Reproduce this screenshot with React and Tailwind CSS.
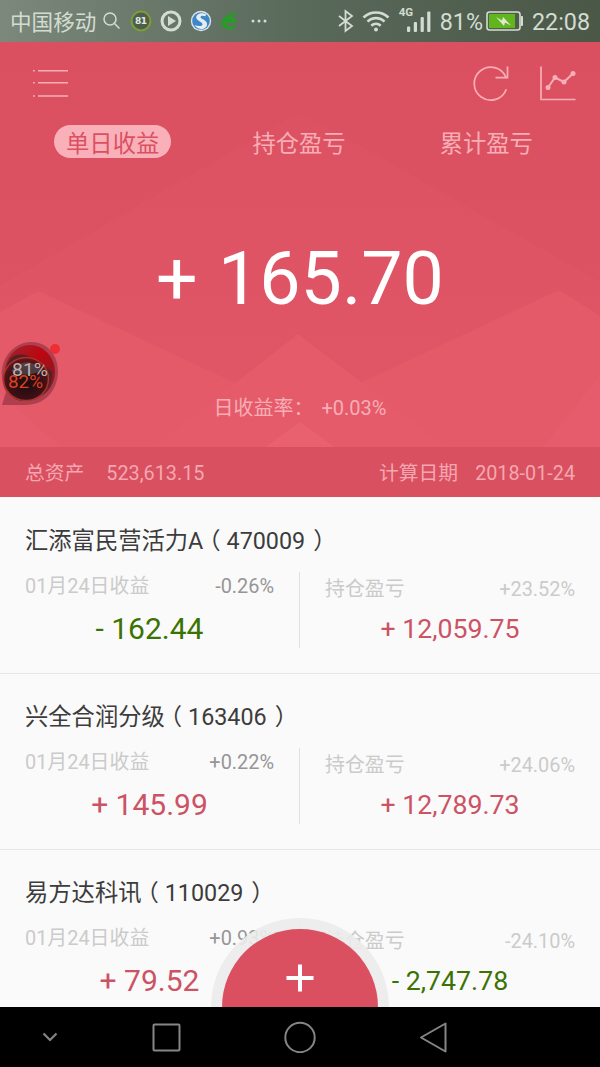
import React from 'react';

const funds = [
  { name: '汇添富民营活力A', code: '470009', dayRate: '-0.26%', day: '- 162.44', totalRate: '+23.52%', total: '+ 12,059.75' },
  { name: '兴全合润分级', code: '163406', dayRate: '+0.22%', day: '+ 145.99', totalRate: '+24.06%', total: '+ 12,789.73' },
  { name: '易方达科讯', code: '110029', dayRate: '+0.93%', day: '+ 79.52', totalRate: '-24.10%', total: '- 2,747.78' },
];

const tabs = ['单日收益', '持仓盈亏', '累计盈亏'];

const amountColor = (value) => (value.startsWith('-') ? 'text-[#3b7303]' : 'text-[#cc5264]');

const StatusBar = () => (
  <div className="flex h-[42px] shrink-0 items-center bg-linear-to-r from-[#7b887b] via-[#59695a] to-[#4b5747] pl-[10px] pr-[10px] text-[#d3dcd2]">
    <span className="w-[87px] pt-[3px] text-[21.6px] leading-[39px]">中国移动</span>
    <svg className="ml-[5px] h-[20px] w-[20px]" viewBox="0 0 20 20" fill="none" stroke="currentColor" strokeWidth="1.5">
      <circle cx="8" cy="8" r="6" />
      <path d="M12.5 12.5 17.5 17.5" />
    </svg>
    <svg className="ml-[8px] h-[22px] w-[22px]" viewBox="0 0 22 22">
      <circle cx="11" cy="11" r="9.4" fill="#4d5f4c" stroke="#7d9e36" strokeWidth="2" />
      <text x="5" y="14.4" fontSize="9" fontWeight="700" fill="#e3e9e2" fontFamily="DejaVu Sans" textLength="12">81</text>
    </svg>
    <svg className="ml-[8px] h-[22px] w-[22px]" viewBox="0 0 22 22">
      <circle cx="11" cy="11" r="9" fill="none" stroke="currentColor" strokeWidth="3" />
      <path d="M8 6v10l8-5z" fill="currentColor" />
    </svg>
    <svg className="ml-[8px] h-[22px] w-[22px]" viewBox="0 0 22 22">
      <circle cx="11" cy="11" r="10.2" fill="#dce5ea" />
      <circle cx="11" cy="11" r="8.8" fill="#3d86c8" />
      <path d="M16 4C10 1.500 5 5 6.500 8.500c1.300 3 6.500 3.500 6 6-.4 2-4.500 2-8 .5 3 5.500 11.500 5.500 12.500 0 .8-5-6-5.500-6.500-7.700-.3-1.800 2.600-2 5-1z" fill="#e6edf0" />
    </svg>
    <svg className="ml-[8px] h-[22px] w-[20px]" viewBox="0 0 20 22" fill="none">
      <path d="M14.500 15.500A5.500 5.500 0 1 1 15 11.500H5" stroke="#1fa31f" strokeWidth="2.600" />
      <path d="M2 18C-1 13 8 3 15 3q1.500.5.5 3" stroke="#1fa31f" strokeWidth="1.400" />
    </svg>
    <svg className="ml-[10px] h-[6px] w-[18px]" viewBox="0 0 18 6" fill="currentColor">
      <circle cx="3" cy="3" r="1.500" />
      <circle cx="9" cy="3" r="1.500" />
      <circle cx="15" cy="3" r="1.500" />
    </svg>
    <div className="ml-auto flex items-center">
      <svg className="h-[24px] w-[18px]" viewBox="0 0 18 24" fill="none" stroke="currentColor" strokeWidth="1.800">
        <path d="M2 7l13 10-6.500 5V2L15 7 2 17" />
      </svg>
      <svg className="ml-[7px] mr-[2px] h-[22px] w-[28px]" viewBox="0 0 28 22" fill="none" stroke="currentColor" strokeWidth="2.600">
        <path d="M1.500 7.500a18 18 0 0 1 25 0" />
        <path d="M5.500 11.700a12 12 0 0 1 17 0" />
        <path d="M9.300 15.700a6.800 6.800 0 0 1 9.400 0" />
        <circle cx="14" cy="19.500" r="2" fill="currentColor" stroke="none" />
      </svg>
      <div className="ml-[7px] flex h-[26px] items-end">
        <span className="w-[8px] self-start text-[11.5px] leading-[9px] font-bold">4G</span>
        <svg className="h-[24px] w-[24px]" viewBox="0 0 24 24" fill="currentColor">
          <rect x="0" y="16.500" width="3.200" height="5.500" rx="1" />
          <rect x="6.800" y="12" width="3.200" height="10" rx="1" />
          <rect x="13.600" y="7" width="3.200" height="15" rx="1" />
          <rect x="20.200" y="1.500" width="3.200" height="20.500" rx="1" />
        </svg>
      </div>
      <span className="ml-[9px] pt-[2px] text-[23.3px] leading-[40px]">81%</span>
      <svg className="ml-[3px] h-[20px] w-[38px]" viewBox="0 0 38 20">
        <rect x="1" y="1" width="33" height="18" rx="2.500" fill="none" stroke="currentColor" strokeWidth="1.600" />
        <path d="M35 5h1q1 0 1 1v8q0 1-1 1h-1z" fill="currentColor" />
        <rect x="3" y="3" width="26" height="14" fill="#62b51c" />
        <path d="M10 6l6 3.500 1-3.500 8 8.500-6-3-1 3.500z" fill="#dfe9d8" />
      </svg>
      <span className="ml-[8px] pt-[2px] text-[23.3px] leading-[40px]">22:08</span>
    </div>
  </div>
);

const HeroBackdrop = () => (
  <svg className="absolute inset-0 h-full w-full" viewBox="0 42 600 405" preserveAspectRatio="none">
    <defs>
      <linearGradient id="heroTop" x1="0" y1="0" x2="0" y2="1">
        <stop offset="0" stopColor="#db5060" />
        <stop offset="1" stopColor="#dd5464" />
      </linearGradient>
      <linearGradient id="heroMid" x1="0" y1="0" x2="0" y2="1">
        <stop offset="0" stopColor="#dd5262" />
        <stop offset="1" stopColor="#e15767" />
      </linearGradient>
    </defs>
    <rect x="0" y="42" width="600" height="405" fill="url(#heroTop)" />
    <path d="M300 112 600 282V447H0V286z" fill="url(#heroMid)" />
    <path d="M0 312 38 291 298 412 559 290 600 316V447H0z" fill="#e45a69" />
    <path d="M298 334 447 447H153z" fill="#e55b6a" />
    <path d="M0 394 61 447H0zM600 375 543 447H600z" fill="#e65c6c" />
    <path d="M300 422 335 447H265z" fill="#e9606f" />
  </svg>
);

const BatteryBubble = () => (
  <div className="absolute left-0 top-[299px]">
    <svg className="block h-[68px] w-[64px]" viewBox="0 0 64 68">
      <defs>
        <radialGradient id="bubbleCore" cx="0.500" cy="0.600" r="0.600">
          <stop offset="0" stopColor="#190b10" />
          <stop offset="0.700" stopColor="#421017" />
          <stop offset="1" stopColor="#741318" />
        </radialGradient>
        <linearGradient id="bubbleRed" x1="0" y1="0" x2="1" y2="1">
          <stop offset="0" stopColor="#9a2830" />
          <stop offset="0.450" stopColor="#bd0610" />
          <stop offset="1" stopColor="#69282f" />
        </linearGradient>
      </defs>
      <path d="M2 64 6 51C-2 36 0 10 24 2 45-3 58 13 58 30 58 50 44 64 26 64z" fill="#a83b4b" opacity="0.900" />
      <ellipse cx="30" cy="31" rx="25" ry="27" fill="url(#bubbleRed)" />
      <path d="M5 30C10 7 27 9 52 31 53 52 35 60 23 60 8 59 4 45 5 30z" fill="#512128" />
      <ellipse cx="26" cy="38" rx="22.500" ry="21.500" fill="url(#bubbleCore)" stroke="#a73526" strokeWidth="1.500" />
      <path d="M11 30Q26 13 42 29 27 38 11 30z" fill="#657071" opacity="0.450" />
      <circle cx="55" cy="8" r="5" fill="#ef2d33" />
      <text x="12" y="35" fontSize="19" fontFamily="Roboto" fill="#b9b2b2" textLength="36" lengthAdjust="spacingAndGlyphs">81%</text>
      <text x="8" y="47" fontSize="18.500" fontFamily="Roboto" fill="#dc421c" textLength="35" lengthAdjust="spacingAndGlyphs">82%</text>
    </svg>
  </div>
);

const Hero = () => (
  <div className="relative flex h-[405px] shrink-0 flex-col text-[#f7aeb6]">
    <HeroBackdrop />
    <div className="relative flex h-[83px] items-center justify-between pl-[32px] pr-[24px]">
      <svg className="h-[30px] w-[37px]" viewBox="0 0 37 30" fill="currentColor">
        <path d="M6 1h30v1.500H6zM6 13h30v1.500H6zM6 26.200h30v1.500H6zM1 1h1.800v1.500H1zM1 13h1.800v1.500H1zM1 26.200h1.800v1.500H1z" />
      </svg>
      <div className="flex items-center gap-[29px]">
        <svg className="h-[38px] w-[38px]" viewBox="0 0 38 38" fill="none" stroke="currentColor" strokeWidth="1.700">
          <path d="M34.300 24.200A16.500 16.500 0 1 1 34 12.300" />
          <path d="M35.500 1.500V12.600H23.500" />
        </svg>
        <svg className="h-[38px] w-[37px]" viewBox="0 0 37 38" fill="none" stroke="currentColor" strokeWidth="1.700">
          <path d="M2 1.500V34.500H36.500" />
          <path d="M9 22.500 16 12.500 25 17 34 8.500" strokeWidth="2" />
          <g fill="currentColor" stroke="none">
            <circle cx="9" cy="22.500" r="2.500" />
            <circle cx="16" cy="12.500" r="2.500" />
            <circle cx="25" cy="17" r="2.500" />
            <circle cx="34" cy="8.500" r="2.500" />
          </g>
        </svg>
      </div>
    </div>
    <div className="relative grid grid-cols-3 pl-[18px] pr-[20px] text-[23.3px]">
      {tabs.map((tab, idx) => (
        <div key={tab} className="flex justify-center">
          <span className={idx === 0 ? 'ml-[2px] h-[33px] w-[117px] rounded-full bg-[#fab0b9] pt-[3px] text-center leading-[33px] text-[#db5060]' : 'h-[33px] pt-[3px] leading-[33px]'}>
            {tab}
          </span>
        </div>
      ))}
    </div>
    <div className="relative mt-[77px] text-center text-[73.5px] leading-[88px] text-white [word-spacing:2px]">+ 165.70</div>
    <div className="relative mt-[70px] flex justify-center text-[20px] leading-[30px]">
      <span>日收益率：</span>
      <span className="ml-[8px]">+0.03%</span>
    </div>
    <BatteryBubble />
  </div>
);

const FundCard = ({ fund }) => (
  <div className="h-[176px] shrink-0 border-b border-[#e6e6e6] pt-[26px]">
    <div className="flex pl-[25px] text-[23.3px] leading-[34px] text-[#3c3c3c]">
      <span>{fund.name}</span>
      <span className="-ml-[6px] mr-[6px]">（</span>
      <span>{fund.code}</span>
      <span className="ml-[8px]">）</span>
    </div>
    <div className="mt-[14px] flex h-[76px]">
      <div className="w-[300px] border-r border-[#e0e0e0] pl-[25px] pr-[25px]">
        <div className="flex justify-between text-[19.9px] leading-[30px]">
          <span className="text-[#cbcbcb]">01月24日收益</span>
          <span className="text-[#969696]">{fund.dayRate}</span>
        </div>
        <div className={`mt-[9px] text-center text-[30px] leading-[36px] ${amountColor(fund.day)}`}>{fund.day}</div>
      </div>
      <div className="w-[300px] pl-[25px] pr-[25px] pt-[3px]">
        <div className="flex justify-between text-[19.9px] leading-[30px] text-[#cbcbcb]">
          <span>持仓盈亏</span>
          <span>{fund.totalRate}</span>
        </div>
        <div className={`mt-[6px] text-center text-[26.7px] leading-[36px] ${amountColor(fund.total)}`}>{fund.total}</div>
      </div>
    </div>
  </div>
);

const NavBar = () => (
  <div className="relative flex h-[60px] shrink-0 items-center bg-black pl-[41px] text-[#858585]">
    <svg className="h-[12px] w-[18px]" viewBox="0 0 18 12" fill="none" stroke="currentColor" strokeWidth="2.200">
      <path d="M2.500 2.500 9 9 15.500 2.500" />
    </svg>
    <svg className="ml-[93px] h-[30px] w-[30px]" viewBox="0 0 30 30" fill="none" stroke="currentColor" strokeWidth="2">
      <rect x="1.500" y="2.500" width="26" height="26" rx="1" />
    </svg>
    <svg className="ml-[102px] h-[32px] w-[32px]" viewBox="0 0 32 32" fill="none" stroke="currentColor" strokeWidth="2">
      <circle cx="16" cy="16.500" r="14.700" />
    </svg>
    <svg className="ml-[102px] h-[32px] w-[30px]" viewBox="0 0 30 32" fill="none" stroke="currentColor" strokeWidth="2" strokeLinejoin="round">
      <path d="M27.500 2.500V30.500L3 16.500z" />
    </svg>
  </div>
);

const App = () => (
  <div className="flex h-[1067px] w-[600px] flex-col overflow-hidden bg-[#fafafa] font-['Roboto','Noto_Sans_CJK_SC',sans-serif]">
    <StatusBar />
    <Hero />
    <div className="flex h-[50px] shrink-0 items-center bg-[#d95060] px-[25px] pt-[3px] text-[19.8px] text-[#f5a7b1]">
      <span>总资产</span>
      <span className="ml-[22px]">523,613.15</span>
      <span className="ml-auto">计算日期</span>
      <span className="ml-[17px]">2018-01-24</span>
    </div>
    <div className="relative flex h-[510px] shrink-0 flex-col overflow-hidden pt-px">
      {funds.map((fund) => (
        <FundCard key={fund.code} fund={fund} />
      ))}
      {/* Add button, cut off by the nav bar */}
      <div className="absolute left-[211px] top-[421px] h-[178px] w-[178px] rounded-full bg-[#ebebeb]/90 p-[11px]">
        <div className="flex h-[156px] w-[156px] justify-center rounded-full bg-[#da5060] pt-[35px]">
          <svg className="h-[28px] w-[28px]" viewBox="0 0 28 28" fill="none" stroke="white" strokeWidth="4">
            <path d="M14 0.500V27.500M0.500 14H27.500" />
          </svg>
        </div>
      </div>
    </div>
    <NavBar />
  </div>
);

export default App;
